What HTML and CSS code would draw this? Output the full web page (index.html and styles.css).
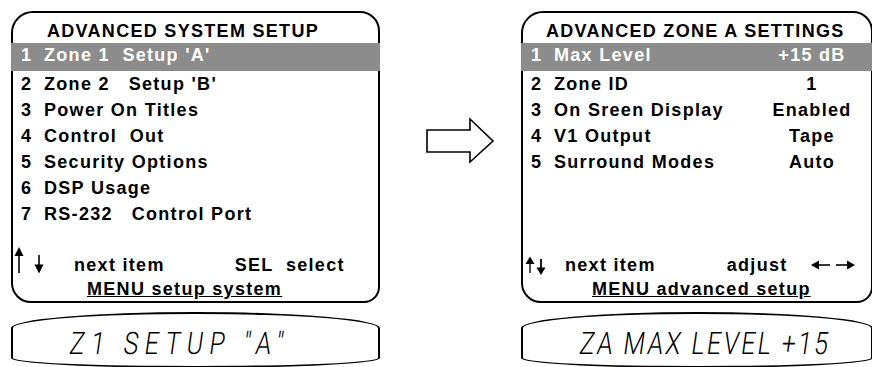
FILE: index.html
```html
<!doctype html>
<html lang="en">
    <head>
        <meta charset="utf-8">
        <title>Advanced setup</title>
        <link rel="stylesheet" href="styles.css">
    </head>
    <body>
        <div class="page">
            <section class="unit">
                <div class="osd">
                    <div class="osd-title">ADVANCED SYSTEM SETUP</div>
                    <ul class="menu">
                        <li class="item active"><span class="num">1</span><span class="label">Zone 1  Setup 'A'</span></li>
                        <li class="item"><span class="num">2</span><span class="label">Zone 2   Setup 'B'</span></li>
                        <li class="item"><span class="num">3</span><span class="label">Power On Titles</span></li>
                        <li class="item"><span class="num">4</span><span class="label">Control  Out</span></li>
                        <li class="item"><span class="num">5</span><span class="label">Security Options</span></li>
                        <li class="item"><span class="num">6</span><span class="label">DSP Usage</span></li>
                        <li class="item"><span class="num">7</span><span class="label">RS-232   Control Port</span></li>
                    </ul>
                    <div class="osd-foot">
                        <div class="keys">
                            <svg class="updown" width="40" height="30" viewBox="0 0 40 30">
                                <line x1="8" y1="6" x2="8" y2="27" stroke="#000" stroke-width="1.6"/>
                                <polygon points="8,1 3.5,10 12.5,10" fill="#000"/>
                                <line x1="28" y1="9" x2="28" y2="22" stroke="#000" stroke-width="1.6"/>
                                <polygon points="28,27.5 23.5,18.5 32.5,18.5" fill="#000"/>
                            </svg>
                            <span class="key-next">next item</span>
                            <span class="key-sel">SEL  select</span>
                        </div>
                        <div class="menu-key">MENU setup system</div>
                    </div>
                </div>
                <div class="lcd"><span class="lcd-text lcd-wide">Z1 SETUP "A"</span></div>
            </section>

            <div class="arrow-gap">
                <svg class="big-arrow" width="70" height="48" viewBox="0 0 70 48">
                    <path d="M2 13 H45 V2 L68 24 L45 45 V35 H2 Z" fill="#fff" stroke="#000" stroke-width="1.6" stroke-linejoin="miter"/>
                </svg>
            </div>

            <section class="unit unit-right">
                <div class="osd">
                    <div class="osd-title">ADVANCED ZONE A SETTINGS</div>
                    <ul class="menu">
                        <li class="item active"><span class="num">1</span><span class="label">Max Level</span><span class="value">+15 dB</span></li>
                        <li class="item"><span class="num">2</span><span class="label">Zone ID</span><span class="value">1</span></li>
                        <li class="item"><span class="num">3</span><span class="label">On Sreen Display</span><span class="value">Enabled</span></li>
                        <li class="item"><span class="num">4</span><span class="label">V1 Output</span><span class="value">Tape</span></li>
                        <li class="item"><span class="num">5</span><span class="label">Surround Modes</span><span class="value">Auto</span></li>
                    </ul>
                    <div class="osd-foot">
                        <div class="keys">
                            <svg class="updown" width="36" height="30" viewBox="0 0 36 30">
                                <line x1="7" y1="14" x2="7" y2="27" stroke="#000" stroke-width="1.4"/>
                                <polygon points="7,10.5 2.5,18 11.5,18" fill="#000"/>
                                <line x1="18" y1="13" x2="18" y2="24" stroke="#000" stroke-width="1.8"/>
                                <polygon points="18,29 13.5,21.5 22.5,21.5" fill="#000"/>
                            </svg>
                            <span class="key-next">next item</span>
                            <span class="key-adjust">adjust</span>
                            <svg class="leftright" width="46" height="30" viewBox="0 0 46 30">
                                <line x1="6" y1="19" x2="20" y2="19" stroke="#000" stroke-width="1.6"/>
                                <polygon points="1,19 9,14.5 9,23.5" fill="#000"/>
                                <line x1="26" y1="19" x2="40" y2="19" stroke="#000" stroke-width="1.6"/>
                                <polygon points="45,19 37,14.5 37,23.5" fill="#000"/>
                            </svg>
                        </div>
                        <div class="menu-key">MENU advanced setup</div>
                    </div>
                </div>
                <div class="lcd"><span class="lcd-text">ZA MAX LEVEL +15</span></div>
            </section>
        </div>
    </body>
</html>
```

FILE: styles.css
```css
html, body{
    margin: 0px;
    padding: 0px;
    background-color: #fff;
    overflow: hidden;
}
body{
    font-family: "Liberation Sans", Arial, sans-serif;
    font-weight: bold;
    font-size: 18px;
    letter-spacing: 1.3px;
    color: #000;
}
.page{
    display: flex;
    padding: 11px 0px 0px 11px;
}
.unit{
    width: 369px;
    flex: none;
}
.unit-right{
    width: 352px;
}
.arrow-gap{
    width: 141px;
    flex: none;
    padding-top: 106px;
}
.big-arrow{
    display: block;
    margin-left: 45px;
}

/* on screen display panel */
.osd{
    box-sizing: border-box;
    height: 292px;
    border: 2px solid #000;
    border-radius: 22px 20px 16px 20px;
    display: flex;
    flex-direction: column;
}
.osd-title{
    padding: 6px 0px 0px 34px;
    line-height: 24px;
}
.unit-right .osd-title{
    padding-left: 23px;
}
.menu{
    list-style: none;
    margin: 0px;
    padding: 0px;
}
.item{
    display: flex;
    line-height: 26px;
    padding-left: 8px;
    white-space: pre;
}
.item.active{
    background-color: #8c8c8c;
    color: #fff;
    line-height: 25px;
    padding-bottom: 3px;
    margin: 0px -2px;
    padding-left: 10px;
}
.num{
    width: 23px;
    flex: none;
}
.label{
    flex: 1;
}
.value{
    width: 80px;
    padding-right: 19px;
    text-align: center;
}
.item.active .value{
    padding-right: 21px;
}
.osd-foot{
    margin-top: auto;
}
.keys{
    display: flex;
    align-items: center;
    height: 26px;
}
.keys svg{
    display: block;
    align-self: flex-start;
    margin-top: -6px;
}
.updown{
    margin-left: -2px;
}
.unit-right .updown{
    margin-left: 0px;
}
.key-next{
    margin-left: 23px;
}
.unit-right .key-next{
    margin-left: 6px;
}
.key-sel{
    margin-left: 70px;
    white-space: pre;
}
.key-adjust{
    margin-left: 71px;
}
.leftright{
    margin-left: 22px;
}
.menu-key{
    line-height: 22px;
    padding: 0px 0px 1px 74px;
    text-decoration: underline;
}
.unit-right .menu-key{
    padding-left: 69px;
}

/* front panel lcd */
.lcd{
    box-sizing: border-box;
    height: 56px;
    margin-top: 9px;
    border: 2px solid #000;
    border-radius: 50% / 16px 16px 10px 10px;
    padding: 8px 0px 0px 57px;
    font-family: Roboto, "Liberation Sans", sans-serif;
    font-weight: 300;
    font-size: 31px;
    line-height: 44px;
    white-space: pre;
}
.lcd-text{
    display: inline-block;
    transform: skewX(-8deg) scaleX(0.8);
    transform-origin: left center;
    letter-spacing: 3px;
}
.lcd-wide{
    letter-spacing: 8px;
}
```
